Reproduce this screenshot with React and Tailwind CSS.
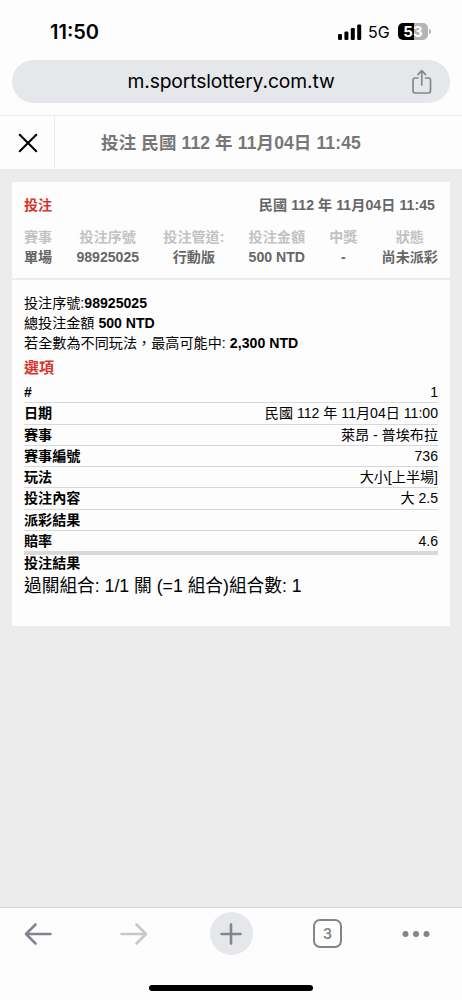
import React from 'react';

const SUMMARY = [
  { label: '賽事', value: '單場' },
  { label: '投注序號', value: '98925025' },
  { label: '投注管道:', value: '行動版' },
  { label: '投注金額', value: '500 NTD' },
  { label: '中獎', value: '-' },
  { label: '狀態', value: '尚未派彩' },
];

const ROWS = [
  { label: '#', value: '1' },
  { label: '日期', value: '民國 112 年 11月04日 11:00' },
  { label: '賽事', value: '萊昂 - 普埃布拉' },
  { label: '賽事編號', value: '736' },
  { label: '玩法', value: '大小[上半場]' },
  { label: '投注內容', value: '大 2.5' },
  { label: '派彩結果', value: '' },
  { label: '賠率', value: '4.6' },
];

const StatusBar = () => (
  <div className="flex h-[60px] items-center justify-between pl-[50px] pr-[31px] pt-[3px] font-['Inter',sans-serif] text-black">
    <span className="w-[60px] whitespace-nowrap text-[20px] font-semibold">11:50</span>
    <div className="flex items-center">
      <svg width="24" height="16" viewBox="0 0 24 16">
        <rect x="0" y="10" width="4" height="6" rx="1.2" />
        <rect x="6.4" y="7.5" width="4" height="8.5" rx="1.2" />
        <rect x="12.8" y="4" width="4" height="12" rx="1.2" />
        <rect x="19.2" y="0.5" width="4" height="15.5" rx="1.2" />
      </svg>
      <span className="ml-[6px] w-[23px] whitespace-nowrap text-[16px] font-normal">5G</span>
      <div className="ml-[7px] flex h-[17px] w-[30px] items-center justify-center rounded-[5px] bg-[linear-gradient(90deg,#000_53%,#b5b5b5_53%)] text-[15px] font-bold leading-none text-white">
        53
      </div>
      <div className="ml-[1px] h-[5px] w-[2px] rounded-r-full bg-[#b5b5b5]" />
    </div>
  </div>
);

const AddressBar = () => (
  <div className="mx-3 flex h-[43px] items-center rounded-full bg-[#e6e7eb] pl-[60px] pr-[17px]">
    <span className="flex-1 whitespace-nowrap text-center font-['Inter',sans-serif] text-[19.3px] tracking-[-0.12px] text-black">
      m.sportslottery.com.tw
    </span>
    <svg className="ml-[21px]" width="22" height="26" viewBox="0 0 22 26" fill="none" stroke="#84878c" strokeWidth="1.7" strokeLinecap="round" strokeLinejoin="round">
      <path d="M7 9H4.2A2.2 2.2 0 0 0 2 11.2V21.800A2.2 2.2 0 0 0 4.2 24H17.300A2.2 2.2 0 0 0 19.5 21.800V11.2A2.2 2.2 0 0 0 17.300 9H14.5" />
      <path d="M10.75 16V2M6.9 5.6L10.75 1.7L14.6 5.6" />
    </svg>
  </div>
);

const TitleBar = () => (
  <div className="mt-[12px] flex h-[55px] border-y border-[#ebebeb]">
    <button className="flex w-[55px] items-center justify-center border-r border-[#ebebeb] pl-[2px]">
      <svg width="20" height="20" viewBox="0 0 20 20" fill="none" stroke="#000" strokeWidth="2.1">
        <path d="M1.2 1.2L18.800 18.800M18.800 1.2L1.2 18.800" />
      </svg>
    </button>
    <h1 className="ml-[46px] whitespace-nowrap text-[17.5px] font-bold leading-[54px] tracking-[0.13px] text-[#777]">
      投注 民國 112 年 11月04日 11:45
    </h1>
  </div>
);

const Ticket = () => (
  <section className="mx-3 mt-3 h-[444px] bg-[#fdfdfd] text-[14.1px] leading-5 text-black">
    {/* Summary */}
    <div className="h-[98px] border-b-2 border-[#ececec] px-3 pt-[13px]">
      <div className="flex h-5 justify-between pr-[3px] font-bold">
        <span className="text-[#d8342b]">投注</span>
        <span className="tracking-[0.07px] text-[#666]">民國 112 年 11月04日 11:45</span>
      </div>
      <div className="mt-[12px] flex justify-between font-bold">
        {SUMMARY.map(item => (
          <div key={item.label} className="whitespace-nowrap text-center">
            <div className="h-5 text-[#c2c2c2]">{item.label}</div>
            <div className="h-5 text-[#666]">{item.value}</div>
          </div>
        ))}
      </div>
    </div>

    {/* Details */}
    <div className="px-3 pt-[13px]">
      <p className="h-5">投注序號:<b>98925025</b></p>
      <p className="h-5">總投注金額 <b>500 NTD</b></p>
      <p className="h-5 tracking-[0.04px]">若全數為不同玩法，最高可能中: <b>2,300 NTD</b></p>
      <h2 className="mt-[5px] h-[24px] text-[15px] font-bold text-[#d8342b]">選項</h2>
      <dl>
        {ROWS.map(row => (
          <div key={row.label} className="flex h-[21.3px] justify-between border-b border-[#d9d9d9] last:h-[24px] last:border-b-4">
            <dt className="font-bold">{row.label}</dt>
            <dd>{row.value}</dd>
          </div>
        ))}
      </dl>
      <p className="-mt-[2px] h-5 font-bold">投注結果</p>
      <p className="h-6 whitespace-nowrap text-[17.7px] leading-[26px]">過關組合: 1/1 關 (=1 組合)組合數: 1</p>
    </div>
  </section>
);

const BottomBar = () => (
  <nav className="h-[93px] border-t border-[#d6d6d6] bg-[#fdfdfd]">
    <div className="grid h-[51px] grid-cols-[75px_118px_76px_117px_60px] items-center justify-items-center">
      <svg width="28" height="24" viewBox="0 0 28 24" fill="none" stroke="#80868b" strokeWidth="2.6" strokeLinecap="round" strokeLinejoin="round">
        <path d="M26.5 12H2M11.5 2.5L2 12L11.5 21.5" />
      </svg>
      <svg width="28" height="24" viewBox="0 0 28 24" fill="none" stroke="#c8c8c8" strokeWidth="2.6" strokeLinecap="round" strokeLinejoin="round">
        <path d="M1.5 12H26M16.5 2.5L26 12L16.5 21.5" />
      </svg>
      <div className="flex h-[43px] w-[43px] items-center justify-center rounded-full bg-[#e6e7eb]">
        <svg width="24" height="24" viewBox="0 0 24 24" stroke="#80868b" strokeWidth="2.6" strokeLinecap="round">
          <path d="M2.5 12H21.5M12 2.5V21.5" />
        </svg>
      </div>
      <div className="flex h-[29px] w-[29px] items-center justify-center rounded-[7px] border-2 border-[#80868b] font-['Inter',sans-serif] text-[14px] font-semibold text-[#80868b]">
        3
      </div>
      <svg width="28" height="8" viewBox="0 0 28 8" fill="#80868b">
        <circle cx="3.5" cy="4" r="3" />
        <circle cx="14" cy="4" r="3" />
        <circle cx="24.5" cy="4" r="3" />
      </svg>
    </div>
    <div className="mx-auto mt-[26px] h-[6px] w-[164px] rounded-full bg-black" />
  </nav>
);

const App = () => {
  return (
    <div lang="zh-TW" className="flex h-[1000px] w-[462px] flex-col overflow-hidden bg-[#fdfdfd] font-['Liberation_Sans','Noto_Sans_CJK_TC',sans-serif]">
      <StatusBar />
      <AddressBar />
      <TitleBar />
      <main className="flex-1 overflow-hidden bg-[#ececec]">
        <Ticket />
      </main>
      <BottomBar />
    </div>
  );
};

export default App;
